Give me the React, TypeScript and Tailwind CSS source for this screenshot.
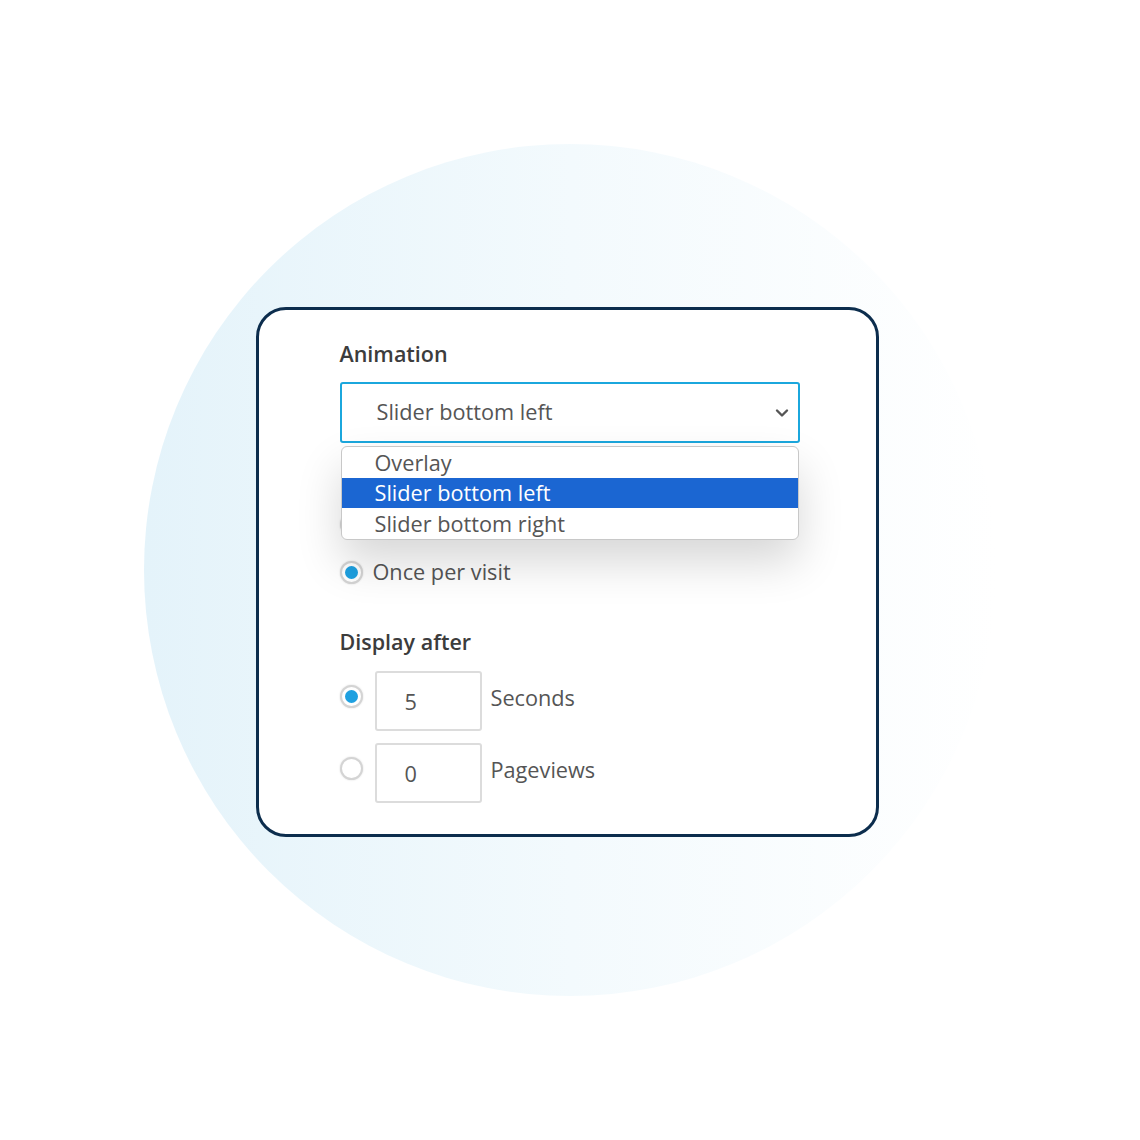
import { ReactNode } from "react";

function Radio({ checked }: { checked?: boolean }) {
  return (
    <span className="flex h-[23px] w-[23px] shrink-0 items-center justify-center rounded-full border-2 border-[#d4d4d4] bg-white shadow-[0_0_2px_rgba(0,0,0,0.15)]">
      {checked && <span className="h-[13px] w-[13px] rounded-full bg-[#1ea0e0]" />}
    </span>
  );
}

function Option({ children, selected }: { children: ReactNode; selected?: boolean }) {
  return (
    <div
      className={
        selected
          ? "flex h-[30px] items-center bg-[#1b66d2] pl-[33px] text-white"
          : "flex h-[31px] items-center pl-[33px] text-[#555]"
      }
    >
      {children}
    </div>
  );
}

function NumberRow({ value, label, checked }: { value: string; label: string; checked?: boolean }) {
  return (
    <div className="flex items-start">
      <div className="flex h-[52px] w-[35px] items-center">
        <Radio checked={checked} />
      </div>
      <div className="flex h-[60px] w-[107px] items-center rounded-[3px] border-2 border-[#dcdcdc] pl-[28px] pt-[4px] text-[21.7px] text-[#555]">
        {value}
      </div>
      <div className="flex h-[56px] items-center pl-[9px] text-[21.7px] text-[#555]">{label}</div>
    </div>
  );
}

export default function App() {
  return (
    <div
      className="flex h-[1140px] w-full items-center justify-center bg-white"
      style={{ fontFamily: '"Open Sans", "Noto Sans", sans-serif' }}
    >
      <div className="flex h-[852px] w-[852px] items-center justify-center rounded-full bg-gradient-to-r from-[#e4f3fa] via-[#f3fafd] to-white">
        <div className="ml-[-6px] mt-[4px] flex w-[623px] flex-col rounded-[30px] border-[3px] border-[#0c2d4d] bg-white pb-[31px] pl-[81px] pr-[76px] pt-[28px]">
          <div className="text-[21.5px] font-semibold leading-[32px] text-[#3c3c3c]">Animation</div>

          <div className="relative mt-[12px]">
            <div className="flex h-[61px] w-[460px] items-center justify-between rounded-[3px] border-2 border-[#1ba7dd] pl-[35px] pr-[8px] text-[21.7px] text-[#555]">
              <span>Slider bottom left</span>
              <svg width="14" height="10" viewBox="0 0 14 10" className="mr-[1px]">
                <path d="M2 2.5 L7 7.5 L12 2.5" fill="none" stroke="#555" strokeWidth="2.4" strokeLinecap="round" strokeLinejoin="round" />
              </svg>
            </div>

            <div className="h-[70px]" />
            <Radio />

            <div className="absolute left-[1px] top-[64px] z-10 w-[458px] overflow-hidden rounded-[6px] border border-[#c8c8c8] bg-white text-[21.7px] leading-none shadow-[0_22px_45px_rgba(0,0,0,0.16)]">
              <Option>Overlay</Option>
              <Option selected>Slider bottom left</Option>
              <Option>Slider bottom right</Option>
            </div>
          </div>

          <div className="mt-[20px] flex items-center">
            <Radio checked />
            <span className="pl-[10px] text-[21.7px] text-[#555]">Once per visit</span>
          </div>

          <div className="mt-[37px] text-[21.5px] font-semibold leading-[32px] text-[#3c3c3c]">Display after</div>

          <div className="mt-[13px] flex flex-col gap-[12px]">
            <NumberRow value="5" label="Seconds" checked />
            <NumberRow value="0" label="Pageviews" />
          </div>
        </div>
      </div>
    </div>
  );
}
